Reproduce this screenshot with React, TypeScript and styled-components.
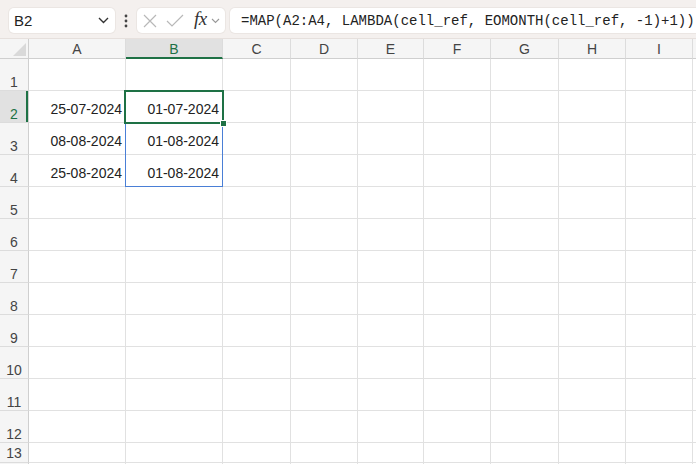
import React from "react";
import styled, { createGlobalStyle } from "styled-components";

const Global = createGlobalStyle`
  html, body { margin: 0; padding: 0; background: #fff; }
  body { width: 696px; height: 464px; overflow: hidden; font-family: "Liberation Sans", Arial, sans-serif; }
`;

const Page = styled.div`
  width: 696px;
  height: 464px;
  overflow: hidden;
  display: flex;
  flex-direction: column;
  background: #fff;
`;

const Toolbar = styled.div`
  flex: none;
  height: 39px;
  box-sizing: border-box;
  display: flex;
  align-items: flex-start;
  padding: 8px 0 0 9px;
  background: #f4f0ee;
  border-bottom: 1px solid #e6e0dd;
`;

const Box = styled.div`
  height: 25px;
  box-sizing: border-box;
  background: #fff;
  border-radius: 5px;
  box-shadow: 0 0 0 1px #ebe6e3;
  display: flex;
  align-items: center;
`;

const NameBox = styled(Box)`
  width: 106px;
  padding: 0 6px 0 5px;
  justify-content: space-between;
  font-size: 15px;
  color: #222;
`;

const Dots = styled.div`
  width: 22px;
  height: 25px;
  display: flex;
  align-items: center;
  justify-content: center;
`;

const FxBox = styled(Box)`
  width: 88px;
  padding: 0 0 0 6px;
`;

const FxText = styled.span`
  font-family: "Liberation Serif", "DejaVu Serif", serif;
  font-style: italic;
  font-size: 19px;
  color: #333;
  margin: -3px 4px 0 10px;
  letter-spacing: -0.5px;
`;

const FormulaBox = styled(Box)`
  flex: 1;
  margin-left: 5px;
  margin-right: -20px;
  padding-left: 11px;
  font-family: "Liberation Mono", "DejaVu Sans Mono", monospace;
  font-size: 14px;
  color: #222;
  white-space: nowrap;
`;

const Sheet = styled.div`
  flex: 1;
  display: grid;
  grid-template-columns: 29px 97px 97px 68px 67px 66px 67px 68px 67px 67px 1fr;
  grid-template-rows: 20px repeat(12, 32px) 20px 1fr;
  font-size: 14px;
  color: #222;
`;

type Pos = { $row: number; $col: number };

const Corner = styled.div`
  grid-row: 1;
  grid-column: 1;
  background: #f5f5f5;
  border-right: 1px solid #cfcfcf;
  border-bottom: 1px solid #cfcfcf;
  box-sizing: border-box;
  display: flex;
  align-items: flex-end;
  justify-content: flex-end;
  padding: 0 2px 2px 0;
`;

const ColHead = styled.div<{ $active?: boolean; $col: number }>`
  grid-row: 1;
  grid-column: ${(p) => p.$col};
  box-sizing: border-box;
  background: ${(p) => (p.$active ? "#e1e1e1" : "#f5f5f5")};
  color: ${(p) => (p.$active ? "#1e7145" : "#444")};
  border-right: 1px solid #dcdcdc;
  border-bottom: ${(p) => (p.$active ? "2px solid #1e7145" : "1px solid #cfcfcf")};
  display: flex;
  align-items: center;
  justify-content: center;
  padding-top: ${(p) => (p.$active ? "1px" : "0")};
  line-height: 16px;
`;

const RowHead = styled.div<{ $active?: boolean; $short?: boolean; $row: number }>`
  grid-row: ${(p) => p.$row};
  grid-column: 1;
  box-sizing: border-box;
  background: ${(p) => (p.$active ? "#e1e1e1" : "#f5f5f5")};
  color: ${(p) => (p.$active ? "#1e7145" : "#444")};
  border-bottom: 1px solid #dcdcdc;
  border-right: 1px solid #cfcfcf;
  box-shadow: ${(p) => (p.$active ? "inset -2px 0 0 #1e7145" : "none")};
  display: flex;
  align-items: ${(p) => (p.$short ? "center" : "flex-end")};
  justify-content: center;
  line-height: 16px;
`;

const Cell = styled.div<Pos>`
  grid-row: ${(p) => p.$row};
  grid-column: ${(p) => p.$col};
  box-sizing: border-box;
  border-right: 1px solid #e1e1e1;
  border-bottom: 1px solid #e1e1e1;
  display: flex;
  align-items: flex-end;
  justify-content: flex-end;
  padding: 0 3px 5px 0;
  line-height: 16px;
  white-space: nowrap;
`;

const ActiveCell = styled.div`
  grid-column: 3;
  grid-row: 3;
  margin: -1px -1px -1px -2px;
  border: 2px solid #1e7145;
  position: relative;
  z-index: 2;
  pointer-events: none;
`;

const FillHandle = styled.div`
  position: absolute;
  right: -5px;
  bottom: -5px;
  width: 5px;
  height: 5px;
  background: #1e7145;
  border: 1px solid #fff;
`;

const RangeBox = styled.div`
  grid-column: 3;
  grid-row: 4 / span 2;
  margin: 0 0 0 -1px;
  border: 1px solid #4a7fd6;
  z-index: 1;
  pointer-events: none;
`;

const cols = ["A", "B", "C", "D", "E", "F", "G", "H", "I", ""];

const data: Record<number, string[]> = {
  2: ["25-07-2024", "01-07-2024"],
  3: ["08-08-2024", "01-08-2024"],
  4: ["25-08-2024", "01-08-2024"],
};

export default function App() {
  const rows = Array.from({ length: 14 }, (_, i) => i + 1);
  return (
    <Page>
      <Global />
      <Toolbar>
        <NameBox>
          <span>B2</span>
          <svg width="11" height="7" viewBox="0 0 11 7">
            <path d="M1 1 L5.5 5.5 L10 1" fill="none" stroke="#333" strokeWidth="1.4" />
          </svg>
        </NameBox>
        <Dots>
          <svg width="4" height="14" viewBox="0 0 4 14">
            <circle cx="2" cy="2" r="1.4" fill="#444" />
            <circle cx="2" cy="7" r="1.4" fill="#444" />
            <circle cx="2" cy="12" r="1.4" fill="#444" />
          </svg>
        </Dots>
        <FxBox>
          <svg width="14" height="14" viewBox="0 0 14 14">
            <path d="M1 1 L13 13 M13 1 L1 13" stroke="#b8b8b8" strokeWidth="1.2" fill="none" />
          </svg>
          <svg width="18" height="13" viewBox="0 0 18 13" style={{ marginLeft: 9 }}>
            <path d="M1 7 L6 12 L17 1" stroke="#b8b8b8" strokeWidth="1.2" fill="none" />
          </svg>
          <FxText>fx</FxText>
          <svg width="9" height="6" viewBox="0 0 9 6">
            <path d="M1 1 L4.5 4.5 L8 1" fill="none" stroke="#999" strokeWidth="1.1" />
          </svg>
        </FxBox>
        <FormulaBox>=MAP(A2:A4, LAMBDA(cell_ref, EOMONTH(cell_ref, -1)+1))</FormulaBox>
      </Toolbar>
      <Sheet>
        <Corner>
          <svg width="13" height="13" viewBox="0 0 13 13">
            <path d="M13 0 L13 13 L0 13 Z" fill="#d9d9d9" />
          </svg>
        </Corner>
        {cols.map((c, i) => (
          <ColHead key={"h" + i} $col={i + 2} $active={c === "B"}>
            {c}
          </ColHead>
        ))}
        {rows.map((r) => (
          <React.Fragment key={r}>
            <RowHead $row={r + 1} $active={r === 2} $short={r === 13}>
              {r <= 13 ? r : ""}
            </RowHead>
            {cols.map((c, ci) => (
              <Cell key={c + ci} $row={r + 1} $col={ci + 2}>
                {data[r] && ci < 2 ? data[r][ci] : ""}
              </Cell>
            ))}
          </React.Fragment>
        ))}
        <ActiveCell>
          <FillHandle />
        </ActiveCell>
        <RangeBox />
      </Sheet>
    </Page>
  );
}
